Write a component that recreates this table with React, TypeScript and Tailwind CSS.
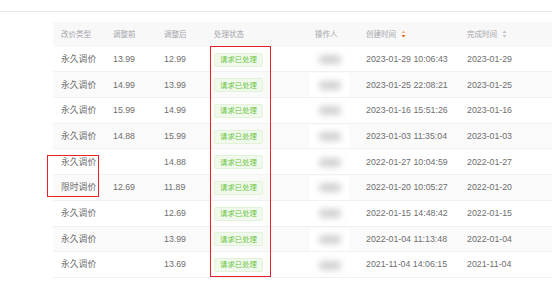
import React from "react";

type Row = {
  type: string;
  before: string;
  after: string;
  created: string;
  done: string;
};

const rows: Row[] = [
  { type: "永久调价", before: "13.99", after: "12.99", created: "2023-01-29 10:06:43", done: "2023-01-29" },
  { type: "永久调价", before: "14.99", after: "13.99", created: "2023-01-25 22:08:21", done: "2023-01-25" },
  { type: "永久调价", before: "15.99", after: "14.99", created: "2023-01-16 15:51:26", done: "2023-01-16" },
  { type: "永久调价", before: "14.88", after: "15.99", created: "2023-01-03 11:35:04", done: "2023-01-03" },
  { type: "永久调价", before: "", after: "14.88", created: "2022-01-27 10:04:59", done: "2022-01-27" },
  { type: "限时调价", before: "12.69", after: "11.89", created: "2022-01-20 10:05:27", done: "2022-01-20" },
  { type: "永久调价", before: "", after: "12.69", created: "2022-01-15 14:48:42", done: "2022-01-15" },
  { type: "永久调价", before: "", after: "13.99", created: "2022-01-04 11:13:48", done: "2022-01-04" },
  { type: "永久调价", before: "", after: "13.69", created: "2021-11-04 14:06:15", done: "2021-11-04" },
];

const SortIcon = ({ active }: { active?: boolean }) => (
  <svg width="5" height="8" viewBox="0 0 5 8" className="ml-[5px]">
    <path d="M2.5 0.5 L4.5 3 L0.5 3 Z" fill={active ? "#f8b47e" : "#c0c4cc"} />
    <path d="M2.5 7.5 L4.5 5 L0.5 5 Z" fill={active ? "#f0651d" : "#c0c4cc"} />
  </svg>
);

const Blurred = () => (
  <div className="ml-[-5px] flex h-full w-[39px] items-center justify-center bg-white">
    <div className="h-[9px] w-[22px] rounded-sm bg-[#d2d2d2] blur-[3px]" />
  </div>
);

export default function App() {
  return (
    <div
      className="relative h-[286px] w-[552px] overflow-hidden bg-white text-[#6e6e6e]"
      style={{ fontFamily: '"Liberation Sans", "Noto Sans CJK SC", sans-serif' }}
    >
      <div className="h-[12px] border-b border-[#e6e6e6]" />
      <div className="pl-[53px] pt-[10px]">
        <div className="flex h-[24.7px] items-center bg-[#f8f8f9] text-[7.5px] text-[#a3a5a9]">
          <div className="w-[52px] pl-[8px]">改价类型</div>
          <div className="w-[51px] pl-[8px]">调整前</div>
          <div className="w-[50px] pl-[8px]">调整后</div>
          <div className="w-[101px] pl-[8px]">处理状态</div>
          <div className="w-[51px] pl-[8px]">操作人</div>
          <div className="flex w-[101px] items-center pl-[8px]">
            创建时间
            <SortIcon active />
          </div>
          <div className="flex flex-1 items-center pl-[8px]">
            完成时间
            <SortIcon />
          </div>
        </div>
        {rows.map((r, i) => (
          <div
            key={i}
            className={`flex h-[25.7px] items-center border-b border-[#f0f1f4] pt-[1px] text-[8.8px] ${
              i % 2 === 1 ? "bg-[#fafafa]" : "bg-white"
            }`}
          >
            <div className="w-[52px] pl-[8px]">{r.type}</div>
            <div className="w-[51px] pl-[8px]">{r.before}</div>
            <div className="w-[50px] pl-[8px]">{r.after}</div>
            <div className="w-[101px] pl-[8px]">
              <div className="flex h-[14px] w-[49px] items-center justify-center rounded-[2px] border border-[#e1f3d8] bg-[#f0f9eb] text-[7.4px] text-[#6cc43f]">
                请求已处理
              </div>
            </div>
            <div className="h-full w-[51px] pl-[8px]">
              <Blurred />
            </div>
            <div className="w-[101px] pl-[8px]">{r.created}</div>
            <div className="flex-1 pl-[8px]">{r.done}</div>
          </div>
        ))}
      </div>

      <div className="absolute left-[210px] top-[46px] h-[231px] w-[61px] border-[1.5px] border-[#e8212b]" />
      <div className="absolute left-[47px] top-[155px] h-[42px] w-[52px] border-[1.5px] border-[#e8212b]" />
    </div>
  );
}
